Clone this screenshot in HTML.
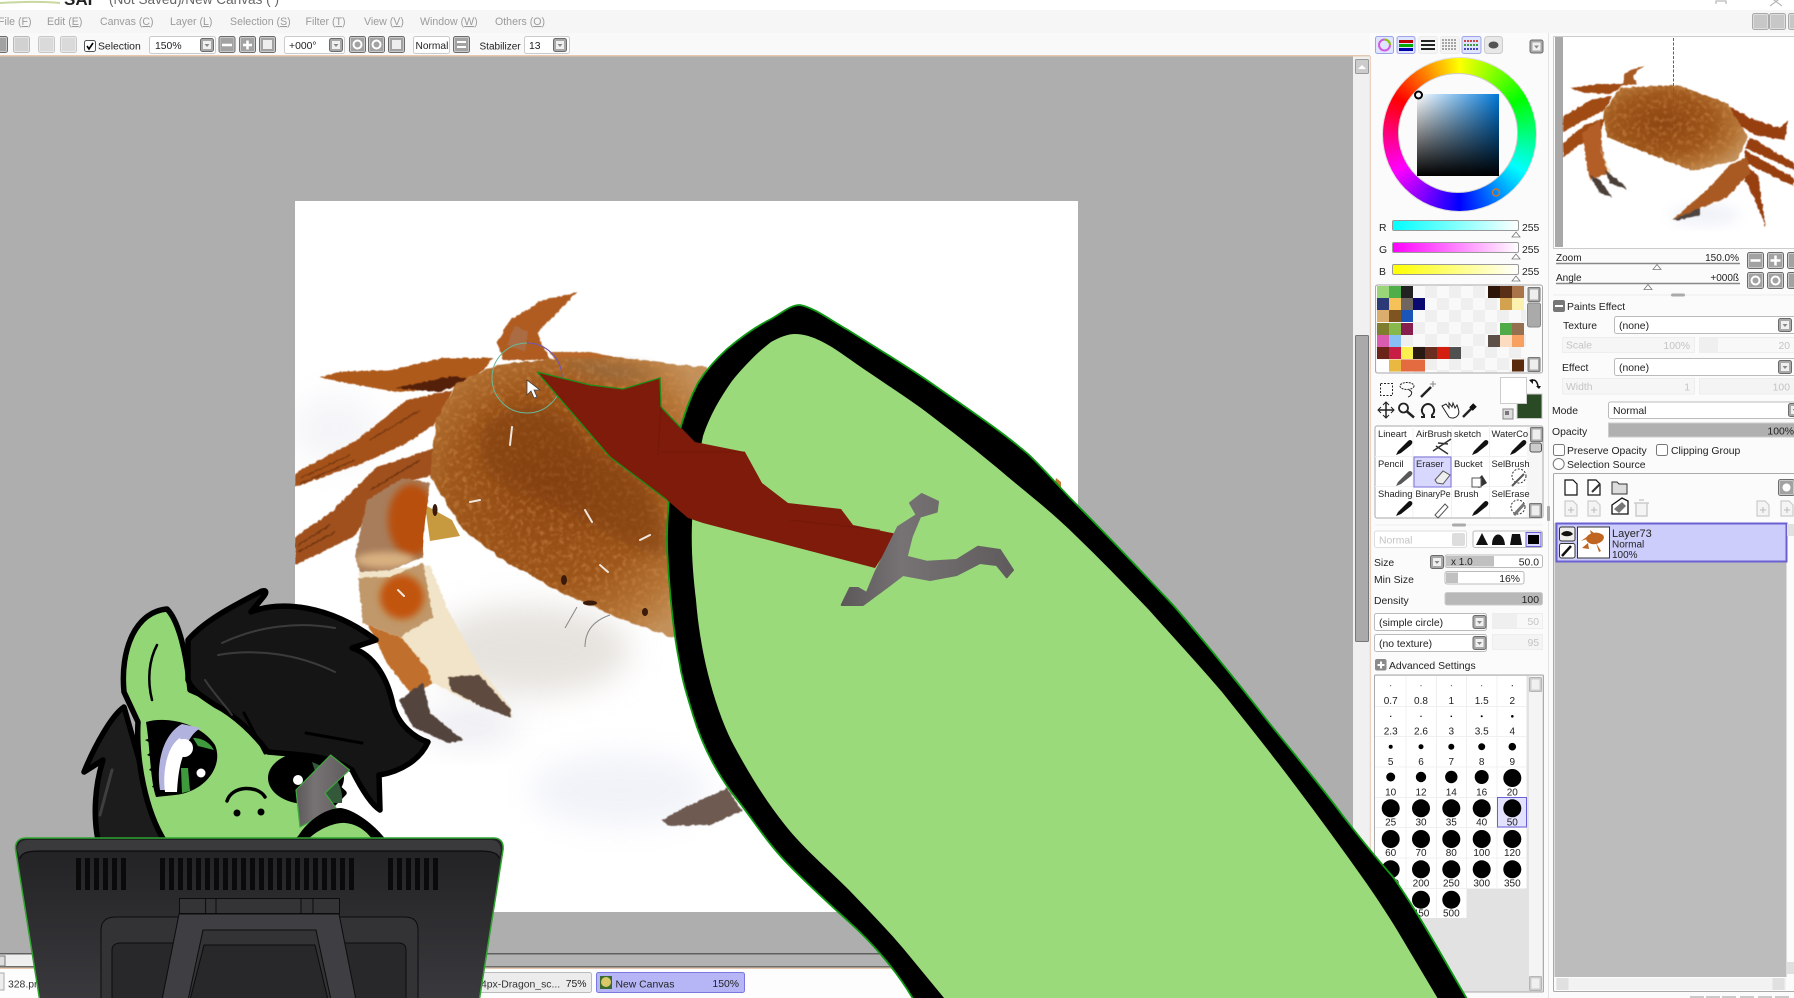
<!DOCTYPE html>
<html><head><meta charset="utf-8"><title>SAI</title>
<style>
html,body{margin:0;padding:0;width:1794px;height:998px;overflow:hidden;background:#fbfbfb}
.a{position:absolute}
svg{position:absolute;left:0;top:0}
text{font-family:"Liberation Sans",sans-serif;font-size:10.4px;fill:#222;white-space:pre}
.m{font-size:10.6px;fill:#9b9b9b}
.g{fill:#c4c4c4}
.c{text-anchor:middle}
.r{text-anchor:end}
.br{font-size:9.4px}
.sz text{font-size:10px}
</style></head><body>
<div class="a" style="left:1382.5px;top:57.5px;width:153px;height:153px;border-radius:50%;background:conic-gradient(#ff0,#0f0,#0ff,#00f,#f0f,#f00,#ff0);box-shadow:0 0 0 1px #ddd"></div>
<div class="a" style="left:1398px;top:73px;width:120px;height:120px;border-radius:50%;background:#fbfbfb;border:1px solid #ccc;box-sizing:border-box"></div>
<div class="a" style="left:1417px;top:94px;width:82px;height:82px;background:linear-gradient(to bottom,transparent,#000),linear-gradient(to right,#fff,#0078d8)"></div>
<svg width="1794" height="998" viewBox="0 0 1794 998" xmlns="http://www.w3.org/2000/svg">
<defs>
<filter id="b1" x="-20%" y="-20%" width="140%" height="140%"><feGaussianBlur stdDeviation=".7"/></filter>
<filter id="b2" x="-30%" y="-30%" width="160%" height="160%"><feGaussianBlur stdDeviation="3.5"/></filter>
<filter id="b3" x="-30%" y="-30%" width="160%" height="160%"><feGaussianBlur stdDeviation="7"/></filter>
<filter id="b8" x="-50%" y="-50%" width="200%" height="200%"><feGaussianBlur stdDeviation="16"/></filter>
<filter id="rough" x="-10%" y="-10%" width="120%" height="120%" color-interpolation-filters="sRGB"><feTurbulence type="fractalNoise" baseFrequency=".1" numOctaves="2" seed="3"/><feDisplacementMap in="SourceGraphic" scale="5" xChannelSelector="R" yChannelSelector="G"/><feGaussianBlur stdDeviation=".6"/></filter>
<filter id="rough2" x="-10%" y="-10%" width="120%" height="120%" color-interpolation-filters="sRGB"><feTurbulence type="fractalNoise" baseFrequency=".25" numOctaves="2" seed="5"/><feDisplacementMap in="SourceGraphic" scale="3" xChannelSelector="R" yChannelSelector="G"/><feGaussianBlur stdDeviation=".5"/></filter>
<filter id="mott" x="0" y="0" width="100%" height="100%" color-interpolation-filters="sRGB"><feTurbulence type="fractalNoise" baseFrequency=".22" numOctaves="2" seed="8" result="n"/><feColorMatrix in="n" values="0 0 0 0 .85 0 0 0 0 .6 0 0 0 0 .34 1.3 0 0 0 -.62" result="c"/><feComposite in="c" in2="SourceAlpha" operator="in" result="s"/><feMerge><feMergeNode in="SourceGraphic"/><feMergeNode in="s"/></feMerge></filter>
<linearGradient id="sr"><stop offset="0" stop-color="#0ff"/><stop offset="1" stop-color="#fff"/></linearGradient>
<linearGradient id="sg"><stop offset="0" stop-color="#f0f"/><stop offset="1" stop-color="#fff"/></linearGradient>
<linearGradient id="sb"><stop offset="0" stop-color="#ff0"/><stop offset="1" stop-color="#fff"/></linearGradient>
<linearGradient id="mon" x1="0" y1="0" x2="0" y2="1"><stop offset="0" stop-color="#212123"/><stop offset="1" stop-color="#3a3a3e"/></linearGradient>
<linearGradient id="gry" x1="0" y1="0" x2="1" y2="0"><stop offset="0" stop-color="#5c585a"/><stop offset=".35" stop-color="#777375"/><stop offset="1" stop-color="#5f5b5d"/></linearGradient>
<radialGradient id="shell" cx=".42" cy=".45" r=".62"><stop offset="0" stop-color="#8e4612"/><stop offset=".55" stop-color="#9e561a"/><stop offset=".82" stop-color="#b47436"/><stop offset="1" stop-color="#c2905a"/></radialGradient>
<pattern id="chk" x="1377" y="286" width="24" height="24" patternUnits="userSpaceOnUse"><rect width="24" height="24" fill="#f9f9f9"/><rect width="12" height="12" fill="#efefef"/><rect x="12" y="12" width="12" height="12" fill="#efefef"/></pattern>
<g id="bt"><rect x=".5" y=".5" width="16" height="16" rx="2" fill="#a2a2a2" stroke="#6c6c6c"/><rect x="1.5" y="1.5" width="14" height="14" rx="1" fill="none" stroke="#c9c9c9"/></g>
<g id="dd"><rect x=".5" y=".5" width="13" height="13" rx="2" fill="#a8a8a8" stroke="#6c6c6c"/><rect x="3" y="3" width="8" height="8" fill="#f0f0f0"/><path d="M4.5 6h5L7 9z" fill="#888"/></g>
<g id="sc"><rect x=".5" y=".5" width="12" height="14" rx="1" fill="#a8a8a8" stroke="#777"/><rect x="2.5" y="2.5" width="8" height="10" fill="#eee"/></g>
<g id="br"><path d="M0 16L2 12L12 2Q14 0 16 2Q17 4 15 6L5 14Z" fill="#111"/></g>
<g id="tri"><path d="M0 5 L4 0 L8 5 Z" fill="#fff" stroke="#777" stroke-width=".8"/></g>
<g id="pg"><path d="M0 0h8l4 4v11H0z" fill="#fff" stroke="#111" stroke-width="1.2"/></g>
<g id="pf"><path d="M0 0h8l4 4v11H0z" fill="#f4f4f4" stroke="#ccc" stroke-width="1.2"/><path d="M3 9h6M6 6v6" stroke="#bbb" fill="none"/></g>
<clipPath id="cv"><rect x="295" y="201" width="783" height="711"/></clipPath>
<clipPath id="seg1"><path d="M355 557L367 500L403 478L430 483L423 537L423 557L390 570L360 572Z"/></clipPath>
<clipPath id="seg2"><path d="M358 578L390 577L423 563L433 617L400 637L363 623Z"/></clipPath>
</defs>

<!-- window chrome -->
<rect x="0" y="0" width="1794" height="10" fill="#fff"/>
<rect x="0" y="10" width="1794" height="23" fill="#f6f6f6"/>
<rect x="0" y="33" width="1370" height="22" fill="#f9f9f9"/>
<rect x="0" y="55" width="1370" height="1.5" fill="#e6c8b0"/>
<path d="M0 3 C20 2 40 1 60 3" stroke="#c8d8a0" fill="none" stroke-width="2"/>
<text x="64" y="5" style="font-size:17px;font-weight:bold" fill="#444">SAI</text>
<text x="109" y="4" style="font-size:13.6px;fill:#666">(Not Saved)/New Canvas ( )</text>
<path d="M1716 4v-3h10v3M1770 -3l12 9M1782 -3l-12 9" stroke="#aaa" fill="none"/>
<text class="m" x="-2" y="25">File (<tspan text-decoration="underline">F</tspan>)</text>
<text class="m" x="47" y="25">Edit (<tspan text-decoration="underline">E</tspan>)</text>
<text class="m" x="100" y="25">Canvas (<tspan text-decoration="underline">C</tspan>)</text>
<text class="m" x="170" y="25">Layer (<tspan text-decoration="underline">L</tspan>)</text>
<text class="m" x="230" y="25">Selection (<tspan text-decoration="underline">S</tspan>)</text>
<text class="m" x="305.5" y="25">Filter (<tspan text-decoration="underline">T</tspan>)</text>
<text class="m" x="364" y="25">View (<tspan text-decoration="underline">V</tspan>)</text>
<text class="m" x="420" y="25">Window (<tspan text-decoration="underline">W</tspan>)</text>
<text class="m" x="495" y="25">Others (<tspan text-decoration="underline">O</tspan>)</text>
<use href="#bt" x="-9" y="36"/><use href="#bt" x="13" y="36" opacity=".45"/>
<use href="#bt" x="38" y="36" opacity=".35"/><use href="#bt" x="60" y="36" opacity=".35"/>
<rect x="84.5" y="40.5" width="11" height="11" rx="2" fill="#fff" stroke="#555"/><path d="M87 46l2 3 4-6" stroke="#000" stroke-width="1.6" fill="none"/>
<text x="98" y="49.5">Selection</text>
<rect x="149.5" y="36.5" width="66" height="17" rx="2" fill="#fff" stroke="#ccc"/><text x="155" y="49">150%</text><use href="#dd" x="200" y="38"/>
<use href="#bt" x="218.5" y="36"/><use href="#bt" x="239" y="36"/><use href="#bt" x="259" y="36"/>
<path d="M222 45h10M243 45h9M247.5 40.5v9" stroke="#fff" stroke-width="2.5"/><rect x="263" y="40" width="9" height="9" fill="#eee"/>
<rect x="284.5" y="36.5" width="60" height="17" rx="2" fill="#fff" stroke="#ccc"/><text x="289" y="49">+000°</text><use href="#dd" x="329" y="38"/>
<use href="#bt" x="349" y="36"/><use href="#bt" x="368" y="36"/><use href="#bt" x="388" y="36"/>
<circle cx="357.5" cy="44.5" r="4" fill="none" stroke="#fff" stroke-width="2"/><circle cx="376.5" cy="44.5" r="4" fill="none" stroke="#fff" stroke-width="2"/><rect x="392" y="40" width="9" height="9" fill="#eee"/>
<rect x="413.5" y="36.5" width="36" height="17" rx="2" fill="#fff" stroke="#ccc"/><text x="415.5" y="49" style="font-size:10.2px">Normal</text>
<use href="#bt" x="453" y="36"/><path d="M457 42h9M457 47h9" stroke="#fff" stroke-width="2"/>
<text x="479.5" y="49.5" style="font-size:10px">Stabilizer</text>
<rect x="524.5" y="36.5" width="45" height="17" rx="2" fill="#fff" stroke="#ccc"/><text x="529" y="49">13</text><use href="#dd" x="553" y="38"/>

<!-- canvas -->
<rect x="0" y="56.5" width="1353" height="897" fill="#aeaeae"/>
<rect x="295" y="201" width="783" height="711" fill="#fff"/>
<rect x="0" y="953" width="1353" height="1.5" fill="#606060"/>
<rect x="0" y="954.5" width="1353" height="12" fill="#b2b2b2"/>
<rect x="0" y="954.5" width="45" height="12" fill="#efefef"/>
<rect x="0" y="966" width="1370" height="1.5" fill="#6c6c6c"/>
<rect x="0" y="967.5" width="1370" height="1.5" fill="#e6c8b0"/>
<rect x="0" y="969" width="1370" height="29" fill="#fdfdfd"/>
<rect x="-4" y="956" width="9" height="10" fill="#ddd" stroke="#777"/>
<rect x="1353" y="56.5" width="16" height="912" fill="#f0f0f0"/>
<rect x="1355.5" y="59.5" width="13" height="14" rx="1" fill="#ccc" stroke="#999"/><path d="M1358 69l4-4 4 4z" fill="#fff"/>
<rect x="1355.5" y="335.5" width="13" height="306" rx="1" fill="#aaa" stroke="#777"/>
<rect x="1369.5" y="56" width="1.5" height="942" fill="#ecd2c0"/>

<!-- crab on canvas -->
<g clip-path="url(#cv)">
<ellipse cx="335" cy="430" rx="45" ry="35" fill="#dcdee8" filter="url(#b8)" opacity=".3"/>
<ellipse cx="530" cy="650" rx="100" ry="45" fill="#d6d0c8" filter="url(#b8)" opacity=".6"/>
<ellipse cx="620" cy="790" rx="90" ry="35" fill="#dfe3f0" filter="url(#b8)" opacity=".45"/>
<ellipse cx="470" cy="725" rx="50" ry="20" fill="#dcdce6" filter="url(#b8)" opacity=".5"/>
<g filter="url(#rough2)">
<path d="M577 292L543 300L510 320L497 342L503 360L550 360L537 333L560 310Z" fill="#b05c20"/>
<path d="M507 345L515 325L528 332L525 352Z" fill="#a8765c" opacity=".6"/>
<path d="M550 352L590 352L640 362L560 368Z" fill="#b9692a"/>
<path d="M320 377L340 371.700L390 370L443 358L493 358L477 377L453 388L397 392L340 382Z" fill="#ae5a1a"/>
<path d="M395 388L453 376L470 380L440 392Z" fill="#54200a"/>
<path d="M295 473L357 440L407 400L453 390L440 420L407 443L363 463L295 487Z" fill="#a5521a"/>
<path d="M300 478L350 455M300 484L355 460M370 440L420 410" stroke="#7a3a10" stroke-width="1.500" fill="none"/>
<path d="M295 537L330 513L377 467L435 448L432 475L390 487L353 537L295 565Z" fill="#a0501c"/>
<path d="M298 545L330 525M298 552L335 532M370 490L420 460" stroke="#6e3410" stroke-width="1.500" fill="none"/>
</g>
<path d="M425 505L452 520L460 536L430 541Z" fill="#c89a40"/>
<g filter="url(#rough)">
<g filter="url(#mott)">
<path d="M457 383L497 365L557 358L623 358L707 368L720 420L700 645L673 637L623 620L557 590L507 563L463 530L430 477L437 417Z" fill="url(#shell)"/>
</g>
</g>
<path d="M482 428C515 392 565 398 590 450C640 470 668 500 668 555C630 558 580 512 540 500C500 490 470 470 482 428Z" fill="#7a3a0e" opacity=".5" filter="url(#b3)"/>
<path d="M560 362C600 360 640 366 660 374C620 385 590 378 560 362Z" fill="#7c6650" opacity=".45" filter="url(#b3)"/>
<g filter="url(#rough2)">
<path d="M358 573L430 565L448 610L479 667L510 707L513 717L465 700L434 683L410 690L390 640Z" fill="#f1e4c8"/>
<path d="M368 625L402 638L428 670L432 684L412 695L388 665Z" fill="#c0702c"/>
<path d="M355 557L367 500L403 478L430 483L423 537L423 557L390 570L360 572Z" fill="#a87d5c"/>
<path d="M358 578L390 577L423 563L433 617L400 637L363 623Z" fill="#c0986a"/>
<path d="M448 677L479 675L511 710L510 717L482 707L451 690Z" fill="#5e4a3e"/>
<path d="M423 683L430 713L463 740L448 743L413 727L399 700Z" fill="#54443e"/>
<path d="M742 811L727 788L688 806L662 820L668 826L710 825Z" fill="#6e5a50"/>
</g>
<g clip-path="url(#seg1)"><ellipse cx="412" cy="520" rx="24" ry="36" fill="#b8500e" filter="url(#b2)"/><ellipse cx="385" cy="560" rx="30" ry="8" fill="#d8b080" filter="url(#b2)"/></g>
<g clip-path="url(#seg2)"><ellipse cx="402" cy="597" rx="22" ry="22" fill="#c2540c" filter="url(#b2)"/></g>
<path d="M1056 478l5 4v6l-6-5z" fill="#c47a30"/>
<g fill="none" stroke="#efe8de" stroke-width="2" stroke-linecap="round">
<path d="M512 427L510 445M470 502L480 500M585 510L592 522M640 540L650 535M600 565L608 572M398 590L404 596"/>
</g>
<g fill="none" stroke="#8a8588" stroke-width="1"><path d="M577 607L565 628M610 615C595 620 585 630 585 647"/></g>
<g fill="#3a1a08"><ellipse cx="435" cy="510" rx="2.500" ry="6"/><ellipse cx="564" cy="580" rx="3" ry="5"/><ellipse cx="590" cy="603" rx="7" ry="2.500"/><ellipse cx="645" cy="612" rx="3" ry="4"/></g>
<circle cx="527" cy="378" r="35" fill="none" stroke="#68b89a" stroke-width="1"/>
<path d="M527 343A35 35 0 0 1 562 378" fill="none" stroke="#7a4aa8" stroke-width="1"/>
<path d="M527 380V395L531 391L534 398L537 397L534 390L540 390Z" fill="#fff" stroke="#444" stroke-width=".8"/>
</g>

<!-- bottom tabs -->
<rect x="-6" y="973" width="10" height="17" fill="#eee" stroke="#aaa"/>
<text x="8" y="987.5" style="fill:#333">328.png</text>
<rect x="470.5" y="972.5" width="121" height="20" rx="2" fill="#ececec" stroke="#bbb"/>
<text x="481" y="987.5" style="fill:#333">4px-Dragon_sc...</text><text x="586.5" y="987" class="r">75%</text>
<rect x="596.5" y="972.5" width="148" height="20" rx="2" fill="#b6b6f6" stroke="#7a78e0"/>
<rect x="600" y="976" width="12" height="13" fill="#3a6a30"/><circle cx="606" cy="982" r="5" fill="#d8c868"/>
<text x="615.5" y="987.5">New Canvas</text><text x="739" y="987" class="r">150%</text>

<!-- colour tabs -->
<rect x="1375.5" y="36.5" width="18" height="17" rx="2" fill="#dfe4ff" stroke="#9da4ea"/><circle cx="1384.5" cy="45" r="5.5" fill="none" stroke="#d25ae0" stroke-width="2"/><path d="M1384.5 39.5A5.5 5.5 0 0 1 1390 45" stroke="#8c0" stroke-width="2" fill="none"/>
<rect x="1397" y="36.5" width="18" height="17" rx="2" fill="#dfe4ff" stroke="#9da4ea"/><rect x="1399" y="40" width="14" height="3" fill="#b00"/><rect x="1399" y="44" width="14" height="3" fill="#0a0"/><rect x="1399" y="48" width="14" height="3" fill="#00a"/>
<rect x="1418.5" y="36.5" width="19" height="17" rx="2" fill="#f4f4f4" stroke="#ececec"/><path d="M1421 41h14M1421 45h14M1421 49h14" stroke="#222" stroke-width="2"/>
<rect x="1440.5" y="36.5" width="19" height="17" rx="2" fill="#f4f4f4" stroke="#ececec"/><path d="M1442 40h15M1442 43h15M1442 46h15M1442 49h15" stroke="#555" stroke-dasharray="2 1"/>
<rect x="1462" y="36.5" width="19" height="17" rx="2" fill="#dfe4ff" stroke="#9da4ea"/><path d="M1464 41h15" stroke="#c44" stroke-width="2" stroke-dasharray="2 1"/><path d="M1464 45h15" stroke="#494" stroke-width="2" stroke-dasharray="2 1"/><path d="M1464 49h15" stroke="#44b" stroke-width="2" stroke-dasharray="2 1"/>
<rect x="1484.5" y="36.5" width="18" height="17" rx="3" fill="#e8e8e8" stroke="#ccc"/><ellipse cx="1493.5" cy="45" rx="5" ry="3.5" fill="#555"/>
<use href="#dd" x="1529.5" y="39.5"/>
<circle cx="1418.5" cy="95" r="3.5" fill="none" stroke="#000" stroke-width="2"/>
<circle cx="1496" cy="192.5" r="3.5" fill="none" stroke="#c87830" stroke-width="1.5"/>
<text x="1379" y="231">R</text><text x="1379" y="253">G</text><text x="1379" y="275">B</text>
<rect x="1392.5" y="220.5" width="126" height="10" rx="1.5" fill="url(#sr)" stroke="#999"/>
<rect x="1392.5" y="242.5" width="126" height="10" rx="1.5" fill="url(#sg)" stroke="#999"/>
<rect x="1392.5" y="264.5" width="126" height="10" rx="1.5" fill="url(#sb)" stroke="#999"/>
<use href="#tri" x="1512" y="232"/><use href="#tri" x="1512" y="254"/><use href="#tri" x="1512" y="276"/>
<text x="1522" y="231">255</text><text x="1522" y="253">255</text><text x="1522" y="275">255</text>

<!-- palette -->
<rect x="1375.5" y="285" width="167" height="88" rx="2" fill="url(#chk)" stroke="#aaa"/>
<rect x="1526" y="286" width="16" height="86" fill="#fafafa"/>
<g>
<rect x="1377" y="286" width="12" height="12" fill="#9bd579"/><rect x="1389" y="286" width="12" height="12" fill="#4fae4a"/><rect x="1401" y="286" width="12" height="12" fill="#222"/>
<rect x="1488" y="286" width="12" height="12" fill="#2c1508"/><rect x="1500" y="286" width="12" height="12" fill="#5a2f18"/><rect x="1512" y="286" width="12" height="12" fill="#a9744a"/>
<rect x="1377" y="298" width="12" height="12" fill="#2c3b78"/><rect x="1389" y="298" width="12" height="12" fill="#f5c25a"/><rect x="1401" y="298" width="12" height="12" fill="#6f6660"/><rect x="1413" y="298" width="12" height="12" fill="#0a0a70"/>
<rect x="1500" y="298" width="12" height="12" fill="#d2a24f"/><rect x="1512" y="298" width="12" height="12" fill="#fdf1b0"/>
<rect x="1377" y="310" width="12" height="12" fill="#dcae6e"/><rect x="1389" y="310" width="12" height="12" fill="#7e5520"/><rect x="1401" y="310" width="12" height="12" fill="#1c55b8"/>
<rect x="1377" y="323" width="12" height="12" fill="#7e7e2e"/><rect x="1389" y="323" width="12" height="12" fill="#86b84e"/><rect x="1401" y="323" width="12" height="12" fill="#861e4e"/>
<rect x="1500" y="323" width="12" height="12" fill="#4faa48"/><rect x="1512" y="323" width="12" height="12" fill="#946f50"/>
<rect x="1377" y="335" width="12" height="12" fill="#d95cb0"/><rect x="1389" y="335" width="12" height="12" fill="#88c0f5"/>
<rect x="1488" y="335" width="12" height="12" fill="#5c5048"/><rect x="1500" y="335" width="12" height="12" fill="#fbdcc0"/><rect x="1512" y="335" width="12" height="12" fill="#f8a060"/>
<rect x="1377" y="347" width="12" height="12" fill="#6a2418"/><rect x="1389" y="347" width="12" height="12" fill="#c81e46"/><rect x="1401" y="347" width="12" height="12" fill="#fbf050"/><rect x="1413" y="347" width="12" height="12" fill="#2a1812"/><rect x="1425" y="347" width="12" height="12" fill="#6a2e20"/><rect x="1437" y="347" width="12" height="12" fill="#d41e10"/><rect x="1449" y="347" width="12" height="12" fill="#505050"/>
<rect x="1377" y="359.5" width="12" height="12" fill="#fff"/><rect x="1389" y="359.5" width="12" height="12" fill="#e8b840"/><rect x="1401" y="359.5" width="12" height="12" fill="#e46a40"/><rect x="1413" y="359.5" width="12" height="12" fill="#e46a40"/><rect x="1512" y="359.5" width="12" height="12" fill="#5a2a0c"/>
</g>
<use href="#sc" x="1527.5" y="287"/><rect x="1527.5" y="303" width="13" height="24" rx="2" fill="#aaa" stroke="#888"/><use href="#sc" x="1527.5" y="357"/>

<!-- tools -->
<g fill="none" stroke="#222">
<rect x="1380.5" y="383.5" width="12" height="12" stroke-dasharray="2 1.5"/>
<ellipse cx="1407" cy="386" rx="7" ry="3.5" stroke-dasharray="2 1"/><path d="M1409 390c5 2 2 6-1 7"/>
<path d="M1421 397L1431 387" stroke-width="2.5"/><path d="M1433 381v6M1430 384h6" stroke="#888"/>
<path d="M1378 410h16M1386 402v16" stroke-width="1.5"/><path d="M1383 405l3-3 3 3M1383 415l3 3 3-3M1381 407l-3 3 3 3M1391 407l3 3-3 3"/>
<circle cx="1403.5" cy="408" r="4.5" stroke-width="1.8"/><path d="M1407 411.5l7 6" stroke-width="2.5"/>
<path d="M1421 417h3v-2c-5-5 0-11 4-11s9 6 4 11v2h3" stroke-width="2"/>
<path d="M1442 406l7 11c3 2 7 1 9-2s0-7-1-10l-2 3-2-5-1 4-3-4 0 5-3-4z" fill="#fff" stroke-width="1"/>
<path d="M1463 417l10-10" stroke-width="2.5"/><path d="M1471 409l4-4" stroke-width="5" stroke="#111"/>
</g>
<rect x="1517" y="394" width="25" height="24.5" fill="#2a4a25" stroke="#ccc"/>
<rect x="1500.5" y="377.5" width="26" height="26" fill="#fff" stroke="#ccc"/>
<rect x="1503" y="409" width="10" height="10" fill="#ddd" stroke="#888"/><rect x="1505" y="411" width="4" height="4" fill="#777"/>
<path d="M1531 382c3-4 6-1 7 4" stroke="#111" fill="none" stroke-width="1.5"/><path d="M1529 380l4-1 0 5zM1536 386h5l-2 3z" fill="#111"/>

<!-- brushes -->
<rect x="1375" y="426" width="168" height="92" rx="2" fill="#fff" stroke="#aaa"/>
<rect x="1526.5" y="427" width="16" height="90" fill="#f6f6f6"/>
<path d="M1413 426v91M1451.5 426v91M1489.5 426v91M1375 456.5h151M1375 486.5h151" stroke="#f0f0f0"/>
<rect x="1414" y="457" width="37" height="30" fill="#d8d8ff" stroke="#7a70d8"/>
<text class="br" x="1378" y="437">Lineart</text><text class="br" x="1416" y="437">AirBrush</text><text class="br" x="1454" y="437">sketch</text><text class="br" x="1491.5" y="437">WaterCo</text>
<text class="br" x="1378" y="467">Pencil</text><text class="br" x="1416" y="467">Eraser</text><text class="br" x="1454" y="467">Bucket</text><text class="br" x="1491.5" y="467">SelBrush</text>
<text class="br" x="1378" y="497">Shading</text><text class="br" x="1415.5" y="497" textLength="35" lengthAdjust="spacingAndGlyphs">BinaryPe</text><text class="br" x="1454" y="497">Brush</text><text class="br" x="1491.5" y="497">SelErase</text>
<use href="#br" x="1396" y="439"/><use href="#br" x="1472" y="439"/><use href="#br" x="1510" y="439"/>
<path d="M1433 451l18-12M1436 446l12 8M1438 443l10 1" stroke="#333" stroke-width="1.5" fill="none"/>
<use href="#br" x="1396" y="470" opacity=".7"/>
<path d="M1435 480l8-9 7 4-7 9-6-1z" fill="#eee" stroke="#555"/>
<path d="M1472 485l10-10 5 8-8 5z" fill="#333"/><rect x="1472" y="478" width="9" height="9" fill="#fff" stroke="#555"/>
<circle cx="1519" cy="476" r="7" fill="none" stroke="#333" stroke-dasharray="2 1.5"/><path d="M1512 486l12-12" stroke="#555" stroke-width="2"/>
<use href="#br" x="1396" y="500"/><path d="M1435 515l10-11 3 3-10 11z" fill="#fff" stroke="#555"/><use href="#br" x="1472" y="500"/>
<circle cx="1518" cy="507" r="7" fill="none" stroke="#333" stroke-dasharray="2 1.5"/><path d="M1514 515l10-11" stroke="#777" stroke-width="3"/>
<use href="#sc" x="1530" y="427"/><rect x="1530" y="443" width="11.5" height="9" rx="2" fill="#ccc" stroke="#555"/><use href="#sc" x="1529" y="503"/>
<rect x="1452" y="523.5" width="14" height="3" rx="1.5" fill="#aaa"/><path d="M1375 525h77M1466 525h77" stroke="#eee"/>
<rect x="1374.5" y="531" width="92" height="16.5" rx="2" fill="#fff" stroke="#ddd"/><text x="1379" y="543.5" class="g">Normal</text><rect x="1452" y="533" width="13" height="13" rx="2" fill="#ddd"/>
<rect x="1473" y="531" width="69.5" height="16.5" rx="2" fill="#fff" stroke="#bbb"/>
<path d="M1476 545l6-12 6 12zM1492 545c0-14 12-14 13 0zM1510 545l2-11h8l2 11z" fill="#111"/>
<rect x="1526" y="532.5" width="15" height="14" fill="#d8d8ff" stroke="#6a60d8"/><rect x="1528" y="535" width="11" height="9" fill="#000"/>

<text x="1374" y="566">Size</text><use href="#dd" x="1430" y="555"/>
<rect x="1445" y="555" width="97.5" height="12.5" rx="2" fill="#fff" stroke="#bbb"/><rect x="1446" y="556" width="48" height="10.5" fill="#c0c0c0"/><text x="1451" y="565" style="font-size:10px">x 1.0</text><text x="1539" y="565.5" class="r">50.0</text>
<text x="1374" y="583">Min Size</text>
<rect x="1445" y="571.5" width="79" height="12.5" rx="2" fill="#fff" stroke="#bbb"/><rect x="1446" y="572.5" width="12" height="10.5" fill="#c0c0c0"/><text x="1520" y="582" class="r">16%</text>
<text x="1374" y="604">Density</text>
<rect x="1445" y="592.5" width="97.5" height="12.5" rx="2" fill="#b8b8b8" stroke="#ccc"/><text x="1539" y="603" class="r">100</text>
<rect x="1374.5" y="613.5" width="112" height="17" rx="2" fill="#fff" stroke="#bbb"/><text x="1379" y="626">(simple circle)</text><use href="#dd" x="1472.5" y="615"/>
<rect x="1492.5" y="613.5" width="50" height="15" fill="#f8f8f8" stroke="#eee"/><rect x="1493" y="614" width="24" height="14" fill="#efefef"/><text x="1539" y="625" class="r g">50</text>
<rect x="1374.5" y="634.5" width="112" height="17" rx="2" fill="#fff" stroke="#bbb"/><text x="1379" y="647">(no texture)</text><use href="#dd" x="1472.5" y="636"/>
<rect x="1492.5" y="634.5" width="50" height="15" fill="#f4f4f4" stroke="#eee"/><text x="1539" y="646" class="r g">95</text>
<rect x="1375" y="659" width="11.5" height="11.5" rx="2" fill="#8a8a8a"/><path d="M1377.5 665h7M1381 661.5v7" stroke="#fff" stroke-width="2"/>
<text x="1389" y="669">Advanced Settings</text>

<!-- size grid -->
<rect x="1374.5" y="675" width="169" height="317" rx="1" fill="#e2e2e2" stroke="#aaa"/>
<rect x="1375" y="676" width="151.5" height="212" fill="#fff"/><rect x="1375" y="888" width="91" height="30" fill="#fff"/>
<path d="M1375 706.5h151M1375 736.5h151M1375 767h151M1375 797.5h151M1375 827.5h151M1375 858h151M1375 888.5h151M1406 676v242M1436.5 676v242M1466.5 676v242M1497 676v212" stroke="#f0f0f0"/>
<rect x="1497.5" y="797.5" width="29" height="29.5" fill="#e2e2ff" stroke="#6a60d8"/>
<g fill="#000">
<circle cx="1390.7" cy="685.7" r=".5"/><circle cx="1421" cy="685.7" r=".5"/><circle cx="1451.3" cy="685.7" r=".5"/><circle cx="1481.7" cy="685.7" r=".5"/><circle cx="1512.3" cy="685.7" r=".6"/>
<circle cx="1390.7" cy="716.3" r=".7"/><circle cx="1421" cy="716.3" r=".7"/><circle cx="1451.3" cy="716.3" r=".8"/><circle cx="1481.7" cy="716.3" r="1"/><circle cx="1512.3" cy="716.3" r="1.3"/>
<circle cx="1390.7" cy="746.7" r="2"/><circle cx="1421" cy="746.7" r="2.5"/><circle cx="1451.3" cy="746.7" r="3"/><circle cx="1481.7" cy="746.7" r="3.5"/><circle cx="1512.3" cy="746.7" r="3.8"/>
<circle cx="1390.7" cy="777" r="4.5"/><circle cx="1421" cy="777" r="5.2"/><circle cx="1451.3" cy="777" r="6.2"/><circle cx="1481.7" cy="777" r="7"/><circle cx="1512.3" cy="778" r="9"/>
<circle cx="1390.7" cy="808.3" r="9"/><circle cx="1421" cy="808.3" r="9"/><circle cx="1451.3" cy="808.3" r="9"/><circle cx="1481.7" cy="808.3" r="9"/><circle cx="1512.3" cy="808.3" r="9"/>
<circle cx="1390.7" cy="839" r="9"/><circle cx="1421" cy="839" r="9"/><circle cx="1451.3" cy="839" r="9"/><circle cx="1481.7" cy="839" r="9"/><circle cx="1512.3" cy="839" r="9"/>
<circle cx="1390.7" cy="869.3" r="9"/><circle cx="1421" cy="869.3" r="9"/><circle cx="1451.3" cy="869.3" r="9"/><circle cx="1481.7" cy="869.3" r="9"/><circle cx="1512.3" cy="869.3" r="9"/>
<circle cx="1390.7" cy="899.7" r="9"/><circle cx="1421" cy="899.7" r="9"/><circle cx="1451.3" cy="899.7" r="9"/>
</g>
<g class="sz">
<text class="c" x="1390.7" y="704">0.7</text><text class="c" x="1421" y="704">0.8</text><text class="c" x="1451.3" y="704">1</text><text class="c" x="1481.7" y="704">1.5</text><text class="c" x="1512.3" y="704">2</text>
<text class="c" x="1390.7" y="734.5">2.3</text><text class="c" x="1421" y="734.5">2.6</text><text class="c" x="1451.3" y="734.5">3</text><text class="c" x="1481.7" y="734.5">3.5</text><text class="c" x="1512.3" y="734.5">4</text>
<text class="c" x="1390.7" y="765">5</text><text class="c" x="1421" y="765">6</text><text class="c" x="1451.3" y="765">7</text><text class="c" x="1481.7" y="765">8</text><text class="c" x="1512.3" y="765">9</text>
<text class="c" x="1390.7" y="795.5">10</text><text class="c" x="1421" y="795.5">12</text><text class="c" x="1451.3" y="795.5">14</text><text class="c" x="1481.7" y="795.5">16</text><text class="c" x="1512.3" y="795.5">20</text>
<text class="c" x="1390.7" y="825.5">25</text><text class="c" x="1421" y="825.5">30</text><text class="c" x="1451.3" y="825.5">35</text><text class="c" x="1481.7" y="825.5">40</text><text class="c" x="1512.3" y="825.5">50</text>
<text class="c" x="1390.7" y="856">60</text><text class="c" x="1421" y="856">70</text><text class="c" x="1451.3" y="856">80</text><text class="c" x="1481.7" y="856">100</text><text class="c" x="1512.3" y="856">120</text>
<text class="c" x="1390.7" y="886.5">160</text><text class="c" x="1421" y="886.5">200</text><text class="c" x="1451.3" y="886.5">250</text><text class="c" x="1481.7" y="886.5">300</text><text class="c" x="1512.3" y="886.5">350</text>
<text class="c" x="1390.7" y="916.5">400</text><text class="c" x="1421" y="916.5">450</text><text class="c" x="1451.3" y="916.5">500</text>
</g>
<rect x="1529" y="676" width="13" height="315" fill="#f4f4f4"/>
<use href="#sc" x="1529" y="677" opacity=".5"/><use href="#sc" x="1529" y="976" opacity=".5"/>

<path d="M1548.5 33V998" stroke="#e4e4e4"/><rect x="1547" y="506" width="3" height="15" rx="1" fill="#aaa"/>

<!-- navigator -->
<rect x="1553.5" y="36.5" width="241" height="212" fill="#fff" stroke="#ccc"/>
<rect x="1555" y="37" width="8" height="210" fill="#a8a8a8"/>
<ellipse cx="1705" cy="215" rx="35" ry="10" fill="#e4e8f2" filter="url(#b3)" opacity=".6"/>
<g filter="url(#rough2)">
<path d="M1645 65L1625 73L1623 85L1637 85L1633 75Z" fill="#a85a22"/>
<path d="M1570 88L1600 84L1625 84L1610 94L1585 93ZM1563 117L1590 100L1612 96L1605 110L1575 125L1563 132ZM1563 143L1585 125L1605 118L1600 132L1575 148L1563 158Z" fill="#a04a14"/>
<path d="M1723 103L1750 118L1780 128L1788 120L1785 140L1755 135L1725 116ZM1750 137L1794 163L1794 170L1745 148ZM1745 150L1794 178L1794 186L1745 163ZM1745 165L1758 175L1766 228L1755 200L1745 180Z" fill="#983f10"/>
<g filter="url(#mott)"><path d="M1603 113L1620 88L1677 85L1727 103L1748 137L1737 160L1693 171L1647 153L1607 137Z" fill="url(#shell)"/></g>
<path d="M1582 133L1600 120L1602 147L1608 173L1600 176L1590 180L1587 167Z" fill="#b25e26"/>
<path d="M1600 147L1608 173L1627 187L1615 183Z" fill="#efe2c8"/>
<path d="M1605 170L1625 186L1628 190L1610 183ZM1590 175L1600 180L1612 197L1600 193Z" fill="#4a3e38"/>
<path d="M1747 157L1750 173L1727 197L1672 220L1707 190L1730 165Z" fill="#a85a22"/>
<path d="M1672 220L1700 208L1700 215L1680 220Z" fill="#4e4440"/>
</g>
<path d="M1673.5 38V126" stroke="#e2206e" stroke-dasharray="3 1.5" fill="none"/>
<text x="1556" y="261" style="font-size:10px">Zoom</text><text x="1739" y="261" class="r" style="font-size:10px">150.0%</text>
<path d="M1556 263.5h184M1556 283.5h184" stroke="#888" stroke-width="1.5"/><use href="#tri" x="1653" y="264.5"/>
<text x="1556" y="281" style="font-size:10px">Angle</text><text x="1739" y="281" class="r" style="font-size:10px">+000ß</text><use href="#tri" x="1644" y="284.5"/>
<use href="#bt" x="1747" y="252"/><use href="#bt" x="1767" y="252"/><use href="#bt" x="1787" y="252"/>
<use href="#bt" x="1747" y="272"/><use href="#bt" x="1767" y="272"/><use href="#bt" x="1787" y="272"/>
<path d="M1750.5 260.5h10M1770.5 260.5h10M1775.5 255.5v10" stroke="#fff" stroke-width="2.5"/><circle cx="1755.5" cy="280.5" r="4" stroke="#fff" fill="none" stroke-width="2"/><circle cx="1775.5" cy="280.5" r="4" stroke="#fff" fill="none" stroke-width="2"/>
<use href="#bt" x="1752" y="13" opacity=".55"/><use href="#bt" x="1769" y="13" opacity=".55"/><use href="#bt" x="1788" y="13" opacity=".55"/>
<rect x="1671" y="293.5" width="14" height="3" rx="1.5" fill="#aaa"/><path d="M1553 295h118M1685 295h109" stroke="#eee"/>

<!-- paints effect -->
<rect x="1553" y="300" width="12" height="12" rx="2" fill="#777"/><rect x="1555" y="305" width="8" height="2" fill="#fff"/>
<text x="1567" y="310">Paints Effect</text>
<text x="1563" y="329">Texture</text>
<rect x="1614.5" y="316.5" width="190" height="17" rx="2" fill="#fff" stroke="#bbb"/><text x="1619" y="329">(none)</text><use href="#dd" x="1778" y="318"/>
<rect x="1562.5" y="337.5" width="132" height="15" fill="#f6f6f6" stroke="#eee"/><text x="1566" y="348.5" class="g">Scale</text><text x="1690" y="349" class="r g">100%</text>
<rect x="1699.5" y="337.5" width="100" height="15" fill="#f8f8f8" stroke="#eee"/><rect x="1700" y="338" width="18" height="14" fill="#efefef"/><text x="1790" y="349" class="r g">20</text>
<text x="1562" y="371">Effect</text>
<rect x="1614.5" y="358.5" width="190" height="17" rx="2" fill="#fff" stroke="#bbb"/><text x="1619" y="371">(none)</text><use href="#dd" x="1778" y="360"/>
<rect x="1562.5" y="378.5" width="132" height="15.5" fill="#f6f6f6" stroke="#eee"/><text x="1566" y="390" class="g">Width</text><text x="1690" y="390.5" class="r g">1</text>
<rect x="1699.5" y="378.5" width="100" height="15.5" fill="#f4f4f4" stroke="#eee"/><text x="1790" y="390.5" class="r g">100</text>
<text x="1552" y="414">Mode</text>
<rect x="1608.5" y="402" width="190" height="16.5" rx="2" fill="#fff" stroke="#bbb"/><text x="1613" y="414">Normal</text><use href="#dd" x="1788" y="403"/>
<text x="1552" y="435">Opacity</text>
<rect x="1608.5" y="423" width="190" height="14" fill="#b0b0b0" stroke="#ccc"/><text x="1794" y="434.5" class="r">100%</text>
<rect x="1553.5" y="444.5" width="11" height="11" rx="2" fill="#fff" stroke="#777"/><text x="1567" y="454">Preserve Opacity</text>
<rect x="1656.5" y="444.5" width="11" height="11" rx="2" fill="#fff" stroke="#777"/><text x="1671" y="454">Clipping Group</text>
<circle cx="1558.7" cy="464" r="5.5" fill="#fff" stroke="#777"/><text x="1567" y="468">Selection Source</text>

<!-- layers -->
<rect x="1553.5" y="473.5" width="241" height="518" rx="1" fill="#fbfbfb" stroke="#aaa"/>
<use href="#pg" x="1565" y="480"/>
<use href="#pg" x="1588" y="480"/><path d="M1592 492l8-8" stroke="#333" stroke-width="2"/>
<path d="M1612 482h5l2 2h8v10h-15z" fill="#ddd" stroke="#333"/>
<use href="#bt" x="1778" y="479"/><circle cx="1786.5" cy="487.5" r="4" fill="#fff"/>
<use href="#pf" x="1565" y="501"/><use href="#pf" x="1588" y="501"/>
<path d="M1612 505l10-7 6 3v13h-16z" fill="#fff" stroke="#111" stroke-width="1.3"/><path d="M1614 509l8-7 4 4-7 7z" fill="#777"/>
<path d="M1636 503h11v13h-11zM1634 503h15M1639 500h5" fill="#f4f4f4" stroke="#ccc" stroke-width="1.5"/>
<use href="#pf" x="1757" y="501"/><use href="#pf" x="1781" y="501"/>
<rect x="1554.5" y="523" width="232" height="454" fill="#bcbcbc"/>
<rect x="1556.5" y="523.5" width="230" height="38" fill="#cdcdfb" stroke="#6a60d0" stroke-width="2"/>
<rect x="1559.5" y="527" width="15.5" height="14" rx="2" fill="#eee" stroke="#333"/><path d="M1561 534c3-4 9-4 12 0c-3 3-9 3-12 0z" fill="#111"/>
<rect x="1559.5" y="543.5" width="15.5" height="14.5" rx="2" fill="#fff" stroke="#333"/><path d="M1562 556l9-10" stroke="#111" stroke-width="2.5"/>
<rect x="1577.5" y="527" width="32" height="31" fill="#fff" stroke="#333"/>
<path d="M1586 538c3-6 12-7 17-3c3 4-2 8-7 9c-4 1-10-1-10-6zM1581 541l7-5-1 3zM1582 548l6-5 1 6zM1596 543l5 8-2 1zM1590 530l4 3-3 1z" fill="#c0651f"/>
<text x="1612" y="537" style="font-size:11px">Layer73</text><text x="1612" y="547.5" style="font-size:10px">Normal</text><text x="1612" y="558" style="font-size:10px">100%</text>
<rect x="1556" y="978" width="230" height="12" fill="#f2f2f2"/>
<rect x="1556.5" y="978" width="12" height="12" fill="#e0e0e0"/><rect x="1772.5" y="978" width="12" height="12" fill="#e0e0e0"/>
<rect x="1787" y="524" width="7" height="12" fill="#e0e0e0"/><rect x="1787" y="962" width="7" height="12" fill="#e0e0e0"/>
<path d="M1690 997h14M1706 997h14M1722 997h14M1740 997h14M1758 997h14M1775 997h14" stroke="#999"/>

<!-- pony -->
<g stroke-linejoin="round" stroke-linecap="round">
<path d="M124 707C112 715 95 745 84 772L103 760C95 785 93 815 98 840H165L142 770Z" fill="#1c1c1c" stroke="#000" stroke-width="5.500"/>
<path d="M112 770L100 815" stroke="#555" stroke-width="3" fill="none" opacity=".6"/>
<path d="M124 692C120 650 135 612 167 609C178 620 186 650 190 690L270 725L344 793L296 842H165C145 810 136 760 138 722Z" fill="#93d676" stroke="#000" stroke-width="5.500"/>
<path d="M152 700C147 680 149 660 157 645" stroke="#000" stroke-width="2.500" fill="none"/>
<path d="M146 722C165 716 200 722 215 745C224 766 205 792 175 795L156 797C150 780 150 745 146 722Z" fill="#000"/>
<path d="M147 727L159 735L145 740L158 747L147 755L159 760L149 770L160 775L152 787L162 790L157 797Z" fill="#000"/>
<path d="M160 790C156 765 162 735 182 724L201 728C190 733 178 755 176 790Z" fill="#b2b2de"/>
<path d="M165 792C162 770 168 745 180 738L186 750C180 760 178 775 177 792Z" fill="#fff"/>
<path d="M193 738C203 738 210 743 214 750L198 746ZM181 768L188 768L190 791L182 793Z" fill="#3f9a3e"/>
<circle cx="184" cy="748" r="9" fill="#fff"/><circle cx="201" cy="773" r="4.500" fill="#fff"/>
<ellipse cx="306" cy="778" rx="38" ry="26" fill="#000"/>
<path d="M312 762C328 768 344 780 342 803H332C322 790 316 775 312 762Z" fill="#34583a"/>
<circle cx="298" cy="780" r="5" fill="#fff"/>
<path d="M227 801C232 785 258 785 265 797" stroke="#000" stroke-width="3.500" fill="none"/>
<circle cx="237" cy="813" r="3.500" fill="#000"/><circle cx="261" cy="812" r="3.500" fill="#000"/>
<path d="M188 640C205 620 235 605 262 591C266 590 267 592 264 596L251 612C280 600 330 605 376 640L352 648C375 655 388 680 393 705C398 725 415 738 428 742C420 760 400 772 379 775L380 810C372 805 362 790 352 770C330 755 300 755 268 752C255 735 235 715 215 705C200 695 192 690 188 680Z" fill="#151515" stroke="#000" stroke-width="5.500"/>
<path d="M244 713L265 753M306 733L362 743" stroke="#000" stroke-width="3" fill="none"/>
<path d="M222 643C260 625 300 622 335 628M218 655C260 648 300 655 335 672M205 680C215 695 225 705 232 715" stroke="#555" stroke-width="2" fill="none" opacity=".6"/>
<path d="M330.600 755L349.500 770L325 793L336 808L300 827L296 790Z" fill="url(#gry)" stroke="#3fa83f" stroke-width="1.200"/>
<path d="M296 840C305 822 325 808 341 808C355 810 375 825 386 840Z" fill="#000"/>
<path d="M306 842C315 830 335 822 345 823C358 824 368 832 374 842Z" fill="#93d676"/>
<!-- monitor -->
<path d="M15.500 849C15 842 19 838 26 838H494C500 838 504 842 503 850L479 1002H40Z" fill="url(#mon)" stroke="#2fa52f" stroke-width="1.500"/>
<path d="M20 858C22 852 30 851 40 851H480C490 851 498 853 499 858L501 850C500 842 496 840 490 840H28C20 840 18 844 17 850Z" fill="#3a3a3c"/>
<path d="M20 858C22 852 30 851 40 851H480C490 851 498 853 499 858" fill="none" stroke="#0c0c0c" stroke-width="1.200"/>
<path d="M76 874H130" stroke="#0a0a0a" stroke-width="32" stroke-dasharray="5 4" stroke-linecap="butt"/>
<path d="M160 874H358" stroke="#0a0a0a" stroke-width="32" stroke-dasharray="5 4" stroke-linecap="butt"/>
<path d="M388 874H441" stroke="#0a0a0a" stroke-width="32" stroke-dasharray="5 4" stroke-linecap="butt"/>
<path d="M101 1000V930C101 921 107 917 115 917H405C413 917 418 921 418 930V1000Z" fill="#333336" stroke="#0c0c0c"/>
<path d="M112 1000V950C112 945 116 943 121 943H398C403 943 406 945 406 950V1000Z" fill="#28282b" stroke="#0c0c0c"/>
<path d="M179 914H339L356 1000H162Z" fill="#3f3f43" stroke="#0c0c0c"/>
<path d="M203 930H316L331 1000H188Z" fill="#333336" stroke="#0c0c0c"/>
<path d="M204 945H315L328 1000H190Z" fill="#28282b" stroke="#0c0c0c"/>
<rect x="179.500" y="898.500" width="160" height="15" fill="#343436" stroke="#0c0c0c"/>
<path d="M205.600 898.500v15M216 898.500v15M301 898.500v15M313 898.500v15" stroke="#0c0c0c"/>
</g>

<!-- big leg -->
<path d="M800 305C815 308 830 320 848 330C875 347 905 365 931 383C965 407 1000 430 1028 454C1045 470 1060 488 1076 504C1110 538 1140 570 1173 605C1206 643 1238 683 1270 724C1295 755 1320 785 1343 816C1360 838 1378 860 1393 877C1420 915 1445 962 1470 1004L916 1004C900 975 875 945 848 921C825 900 805 882 785 861C765 840 750 815 732 793C715 770 702 745 693 715C687 695 682 680 679 660C673 630 670 595 668 564C666 540 667 520 669 500C672 475 676 450 681 426C686 410 690 398 698 383C706 370 715 360 727 349C740 338 755 327 771 319C782 313 790 305 800 305Z" fill="#000" stroke="#0d9a12" stroke-width="1.800" stroke-linejoin="round"/>
<path d="M795 334C812 334 830 345 848 358C872 375 897 391 921 408C950 430 980 453 1008 477C1032 497 1055 515 1076 536C1101 560 1125 585 1149 610C1174 638 1198 664 1222 692C1246 722 1270 752 1294 784C1319 817 1343 850 1367 884C1378 900 1390 918 1400 935L1441 1004L949 1004L907 953C888 930 868 910 848 889C827 868 805 850 785 825C765 800 748 772 732 742C722 722 714 698 708 674C702 650 698 625 696 600C693 575 691 550 692 523C693 495 697 465 703 436C710 415 720 398 732 381C745 365 758 352 771 342C780 337 788 334 795 334Z" fill="#9ada7a"/>
<path d="M537 372L590 385L623 389L660 378L661 407L695 442L745 452L762 483L788 503L841 509L853 525L897 534L875 568L703 523L688 518L667 500L610 457Z" fill="#7e1b0a"/>
<path d="M537 372L590 385L623 389L660 378L661 407L681 428M537 372L610 457L667 500" stroke="#1e8c18" stroke-width="1.300" fill="none"/>
<path d="M661 407L658 455M660 452L745 452M790 520L880 530" stroke="#6c1508" stroke-width="1" fill="none" opacity=".6"/>
<path d="M910 503L921.700 494L938 501.700L936.700 511.700L920 516.700L911.700 536.700L906.700 556.700L926.700 561.700L956.700 560L978 546.700L1000 550L1013 570L1006.700 577.300L996.700 565L980 563L956.700 575L930 580L903 575L890 585L863 605L841.700 605L850 588L858 588L866.700 593L875 573L898 527L916.700 515Z" fill="url(#gry)" stroke="url(#gry)" stroke-width="2" stroke-linejoin="round"/>
</svg>
</body></html>
